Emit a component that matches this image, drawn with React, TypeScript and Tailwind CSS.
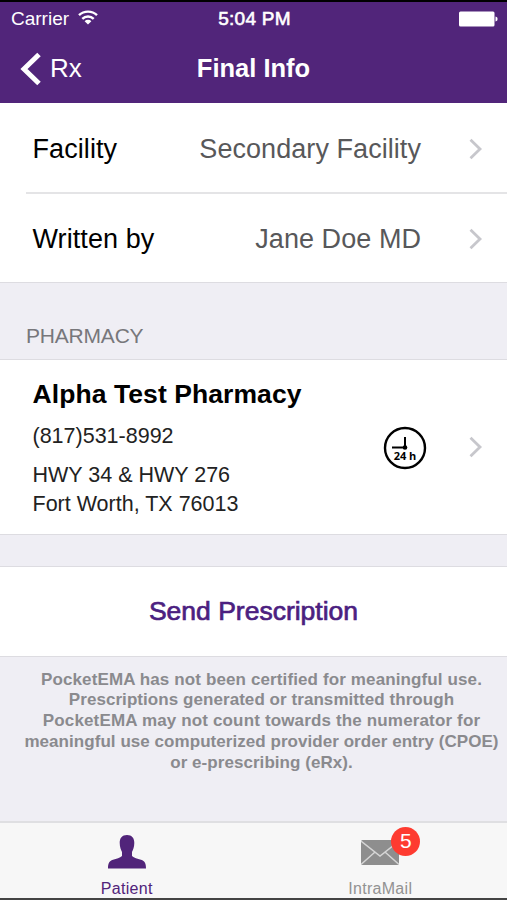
import clsx from "clsx";

const rows = [
  { label: "Facility", value: "Secondary Facility" },
  { label: "Written by", value: "Jane Doe MD" },
];

const disclaimer = [
  { text: "PocketEMA has not been certified for meaningful use.", className: "tracking-[0.12px]" },
  { text: "Prescriptions generated or transmitted through", className: "tracking-[0.06px]" },
  { text: "PocketEMA may not count towards the numerator for", className: "tracking-[0.15px]" },
  { text: "meaningful use computerized provider order entry (CPOE)", className: "tracking-[0.05px]" },
  { text: "or e-prescribing (eRx).", className: "tracking-[0.05px]" },
];

function Chevron() {
  return (
    <svg width="14" height="22" viewBox="0 0 14 22" fill="none" className="shrink-0">
      <path d="M1.5 1.8 11 11l-9.5 9.2" stroke="#c7c7cc" strokeWidth="2.8" />
    </svg>
  );
}

function StatusBar() {
  return (
    <div className="grid h-8 grid-cols-3 items-center border-t-2 border-black pl-[11px] pr-[9px]">
      <div className="flex items-center gap-[9px] pt-px text-[19px] leading-8">
        Carrier
        <svg width="20" height="15" viewBox="0 0 20 15" fill="none" stroke="white" strokeWidth="2.4" className="-mt-1">
          <path d="M1 5.2a13 13 0 0 1 18 0" />
          <path d="M4.3 8.8a8.2 8.2 0 0 1 11.4 0" />
          <path d="M10 14.6 6.6 11.2a4.8 4.8 0 0 1 6.8 0Z" fill="white" stroke="none" />
        </svg>
      </div>
      <p className="pt-px text-center text-[19px] leading-8 tracking-[0.25px] [-webkit-text-stroke:0.6px_white]">
        5:04 PM
      </p>
      <svg width="39" height="16" viewBox="0 0 39 16" fill="white" className="justify-self-end">
        <rect x="0" y="0.5" width="35.5" height="15" rx="1.5" />
        <path d="M36.5 5.5c1.8.4 2 1.2 2 2.5s-.2 2.1-2 2.5Z" />
      </svg>
    </div>
  );
}

function NavBar() {
  return (
    <div className="grid h-[71px] grid-cols-3 items-center pt-0.5 pr-5 pl-5">
      <div className="flex items-center gap-[9px] text-[26px]">
        <svg width="21" height="34" viewBox="0 0 21 34" fill="none">
          <path d="M19 2.5 4 17l15 14.5" stroke="white" strokeWidth="5" />
        </svg>
        Rx
      </div>
      <h1 className="text-center text-[25.5px] font-bold whitespace-nowrap">Final Info</h1>
    </div>
  );
}

function Clock24() {
  return (
    <svg width="44" height="44" viewBox="0 0 44 44" className="mt-0.5 shrink-0">
      <circle cx="22" cy="22" r="20" fill="white" stroke="black" strokeWidth="2.4" />
      <path d="M22 11v10.5H9" fill="none" stroke="black" strokeWidth="2" />
      <circle cx="22" cy="21.5" r="2.3" />
      <text x="22" y="34" textAnchor="middle" className="font-['Open_Sans',sans-serif] text-[11px] font-bold">
        24 h
      </text>
    </svg>
  );
}

function Tab({ label, active, children }: { label: string; active?: boolean; children: React.ReactNode }) {
  return (
    <div className={clsx("flex flex-1 flex-col items-center", active ? "text-[#51247a]" : "text-[#929292]")}>
      <div className="relative mt-3 h-[34px]">{children}</div>
      <span className="mt-2.5 text-[16px] leading-5 tracking-[0.3px]">{label}</span>
    </div>
  );
}

export default function App() {
  return (
    <div className="flex h-[900px] w-[507px] flex-col overflow-hidden bg-[#efeef4] font-['Liberation_Sans',Arial,sans-serif] text-black">
      <header className="h-[103px] bg-[#51257a] text-white">
        <StatusBar />
        <NavBar />
      </header>

      <section className="h-[180px] border-b border-[#dddce1] bg-white">
        {rows.map((row, i) => (
          <div key={row.label} className="pl-[26px]">
            <div
              className={clsx(
                "flex items-center pl-[6.5px] pr-6 text-[27px]",
                i === 0 ? "h-[91px] border-b-2 border-[#e4e4e6] pt-[3px]" : "h-[90px]"
              )}
            >
              <span className="tracking-[0.08px]">{row.label}</span>
              <span className="ml-auto mr-[48px] tracking-[0.06px] text-[#58585a]">{row.value}</span>
              <Chevron />
            </div>
          </div>
        ))}
      </section>

      <h2 className="h-[76px] pl-[26px] pt-[39px] text-[21px] leading-7 tracking-[-0.2px] text-[#77777b]">PHARMACY</h2>

      <section className="flex h-[176px] items-center border-y border-[#dddce1] bg-white pl-[32.5px] pr-6">
        <div className="h-full flex-1 pt-4 text-[21.5px] leading-[30px] text-[#222]">
          <p className="text-[26.5px] leading-9 font-bold tracking-[0.08px] text-black">Alpha Test Pharmacy</p>
          <p className="mt-[9px]">(817)531-8992</p>
          <p className="mt-[9px]">HWY 34 &amp; HWY 276</p>
          <p className="-mt-px">Fort Worth, TX 76013</p>
        </div>
        <Clock24 />
        <div className="ml-[42px]">
          <Chevron />
        </div>
      </section>

      <button className="mt-[31px] h-[91px] shrink-0 border-y border-[#dddce1] bg-white text-[26.5px] text-[#4b2080] [-webkit-text-stroke:0.7px_#4b2080]">
        Send Prescription
      </button>

      <div className="flex flex-col items-center pl-4 pt-[12.5px] text-[17px] leading-[20.8px] font-bold text-[#8a8a8e]">
        {disclaimer.map((line) => (
          <p key={line.text} className={clsx("whitespace-nowrap", line.className)}>
            {line.text}
          </p>
        ))}
      </div>

      <nav className="mt-auto flex h-[79px] border-t-2 border-b-2 border-t-[#dfdfe2] border-b-[#444] bg-[#f7f7f7]">
        <Tab label="Patient" active>
          <svg width="38" height="34" viewBox="0 0 38 34" fill="currentColor">
            <path d="M19 0c5 0 7.3 3 7.3 8 0 4-1.3 7-2.3 9v4c2 2.200 5.500 2.500 9 3.800 4 1.500 5 3.700 5 8.700H0c0-5 1-7.200 5-8.700 3.500-1.300 7-1.600 9-3.800V17c-1-2-2.300-5-2.300-9 0-5 2.300-8 7.300-8Z" />
          </svg>
        </Tab>
        <Tab label="IntraMail">
          <svg width="38" height="34" viewBox="0 0 38 34">
            <rect x="0" y="5" width="38" height="25" rx="1.5" fill="#8e8e8e" />
            <path d="M0 6 19 21 38 6M0 29.5 14 17M38 29.5 24 17" fill="none" stroke="#d5d5d5" strokeWidth="1.5" />
          </svg>
          <span className="absolute -top-[8px] left-[30px] flex size-[29px] items-center justify-center rounded-full bg-[#fe3b30] pb-px text-[21px] text-white">
            5
          </span>
        </Tab>
      </nav>
    </div>
  );
}
